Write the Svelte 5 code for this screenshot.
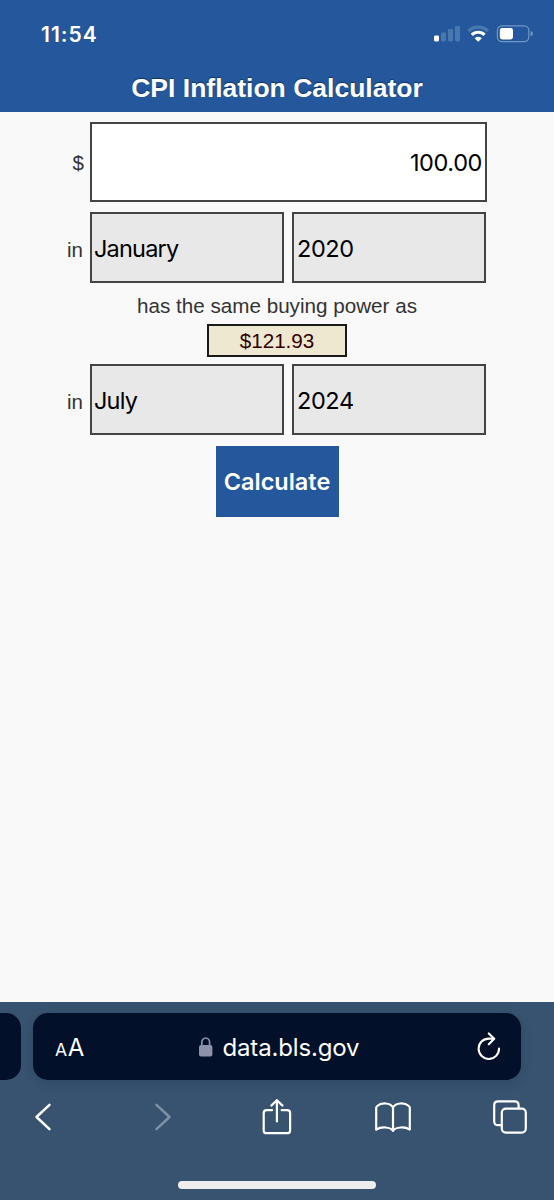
<script lang="ts">
  const months = [
    'January', 'February', 'March', 'April', 'May', 'June',
    'July', 'August', 'September', 'October', 'November', 'December',
  ];
  const years = [2020, 2021, 2022, 2023, 2024];

  let amount = $state('100.00');
  let fromMonth = $state('January');
  let fromYear = $state(2020);
  let toMonth = $state('July');
  let toYear = $state(2024);
  let result = $state('$121.93');
</script>

<div class="screen">
  <header class="header">
    <div class="status">
      <span class="status__time">11:54</span>
      <svg class="status__icons" width="100" height="18" viewBox="0 0 100 18" aria-hidden="true">
        <rect x="0" y="10.4" width="5" height="6" rx="1.3" fill="#fff" />
        <g fill="#4878ae">
          <rect x="7" y="7.4" width="5" height="9" rx="1.3" />
          <rect x="14" y="4" width="5" height="12.4" rx="1.3" />
          <rect x="21" y="1" width="5" height="15.4" rx="1.3" />
        </g>
        <g fill="none" stroke-width="3.2">
          <path d="M34.4 6.1 A14 14 0 0 1 54 6.1" stroke="#4878ae" />
          <path d="M37.8 9.9 A9 9 0 0 1 50.6 9.9" stroke="#fff" />
        </g>
        <path d="M44.2 16.8 L40.6 13.3 Q44.2 10.4 47.8 13.3 Z" fill="#fff" />
        <rect x="63.4" y="0.8" width="31.4" height="15.8" rx="4.6" fill="none" stroke="#7198c3" stroke-width="1.2" />
        <rect x="65.8" y="3" width="13.2" height="11.4" rx="2.4" fill="#fff" />
        <path d="M96.6 6 Q99 6.6 99 8.7 Q99 10.8 96.6 11.4 Z" fill="#7198c3" />
      </svg>
    </div>
    <h1>CPI Inflation Calculator</h1>
  </header>

  <main class="form">
    <div class="row">
      <label for="amount">$</label>
      <input id="amount" class="amount" type="text" bind:value={amount} />
    </div>
    <div class="row row--selects">
      <label for="from-month" class="in">in</label>
      <select id="from-month" class="month" bind:value={fromMonth}>
        {#each months as m (m)}<option value={m}>{m}</option>{/each}
      </select>
      <select aria-label="From year" bind:value={fromYear}>
        {#each years as y (y)}<option value={y}>{y}</option>{/each}
      </select>
    </div>
    <p class="caption">has the same buying power as</p>
    <output class="result">{result}</output>
    <div class="row row--selects row--to">
      <label for="to-month" class="in">in</label>
      <select id="to-month" class="month" bind:value={toMonth}>
        {#each months as m (m)}<option value={m}>{m}</option>{/each}
      </select>
      <select aria-label="To year" bind:value={toYear}>
        {#each years as y (y)}<option value={y}>{y}</option>{/each}
      </select>
    </div>
    <button type="button" class="calculate">Calculate</button>
  </main>

  <footer class="browser">
    <div class="tabs">
      <div class="tabs__prev"></div>
      <div class="address">
        <span class="address__aa"><small>A</small>A</span>
        <span class="address__site">
          <svg width="14" height="20" viewBox="0 0 14 20" aria-hidden="true">
            <rect x="0" y="8" width="13.4" height="11.4" rx="2" fill="#8c93a8" />
            <path d="M2.8 9 V5.4 a3.9 4.4 0 0 1 7.8 0 V9" fill="none" stroke="#8c93a8" stroke-width="1.7" />
          </svg>
          <span>data.bls.gov</span>
        </span>
        <svg class="address__reload" width="24" height="28" viewBox="0 0 24 28" fill="none" stroke="#fff" stroke-width="2.1" stroke-linecap="round" stroke-linejoin="round" aria-hidden="true">
          <path d="M22 16.6 A10.2 10.2 0 1 1 11.8 6.6 L17 6.8" />
          <path d="M11.8 1.4 L17.2 6.8 L11.8 12.2" />
        </svg>
      </div>
    </div>
    <nav class="toolbar">
      <svg width="36" height="28" viewBox="0 0 17 28" aria-hidden="true">
        <path d="M15 1.8 L2 14 L15 26.2" stroke-width="2.5" />
      </svg>
      <svg class="toolbar__off" width="36" height="28" viewBox="-3 0 17 28" aria-hidden="true">
        <path d="M2 1.8 L15 14 L2 26.2" stroke-width="2.5" />
      </svg>
      <svg width="36" height="36" viewBox="0 0 29 36" aria-hidden="true">
        <path d="M9.6 11.2 H4 Q1.2 11.2 1.2 14 V31.4 Q1.2 34.2 4 34.2 H24.8 Q27.6 34.2 27.6 31.4 V14 Q27.6 11.2 24.8 11.2 H19.2" />
        <path d="M14.4 22.4 V1.2 M8.8 6.6 L14.4 1.2 L20 6.6" />
      </svg>
      <svg width="36" height="31" viewBox="0 0 36 31" aria-hidden="true">
        <path d="M18 28.8 C15.4 24.8 6 24.4 1.2 27.6 V6 Q1.2 4.8 2.2 4 C6.6 0.2 15.2 0.6 18 5.4 C20.8 0.6 29.4 0.2 33.8 4 Q34.8 4.8 34.8 6 V27.6 C30 24.4 20.6 24.8 18 28.8 Z M18 5.4 V28.4" />
      </svg>
      <svg width="36" height="34" viewBox="0 0 34 34" aria-hidden="true">
        <path d="M8.8 25.2 H5 Q1.2 25.2 1.2 21.2 V5.2 Q1.2 1.4 5 1.4 H21.6 Q25.6 1.4 25.6 5.2 V8" />
        <rect x="8.8" y="8.6" width="24" height="24" rx="4" />
      </svg>
    </nav>
    <div class="home"></div>
  </footer>
</div>

<style>
  :global(body) {
    margin: 0;
  }
  .screen {
    display: flex;
    flex-direction: column;
    width: 554px;
    height: 1200px;
    overflow: hidden;
    background: #f9f9f9;
    font-family: 'Liberation Sans', Arial, sans-serif;
    color: #333;
  }
  .header {
    box-sizing: border-box;
    height: 112px;
    padding-top: 24px;
    background: #24579b;
    color: #fff;
  }
  .status {
    display: flex;
    justify-content: space-between;
    height: 20px;
    padding: 0 20px 0 41px;
  }
  .status__time {
    font: 600 21px/21px Inter, sans-serif;
    letter-spacing: 1px;
  }
  .status__icons {
    margin-top: 1px;
  }
  h1 {
    margin: 29px 0 0;
    font-size: 26.5px;
    line-height: 30px;
    text-align: center;
    text-shadow: 0 -1px 1px #143563;
  }
  .form {
    flex: 1;
    display: flex;
    flex-direction: column;
    padding-top: 10px;
  }
  .row {
    display: flex;
    align-items: center;
    height: 80px;
  }
  .row label {
    box-sizing: border-box;
    width: 90px;
    padding: 2px 6px 0 0;
    font-size: 20.5px;
    text-align: right;
  }
  .row .in {
    padding: 4px 7px 0 0;
  }
  .row--selects {
    height: 71px;
    margin-top: 10px;
  }
  .row--to {
    margin-top: 8px;
  }
  .amount,
  select {
    appearance: none;
    box-sizing: border-box;
    height: 100%;
    margin: 0;
    border: 2px solid #444;
    border-radius: 0;
    outline: none;
    font: 400 23.5px Inter, sans-serif;
    letter-spacing: -0.4px;
    color: #000;
  }
  .amount {
    width: 397px;
    padding: 0 3px;
    background: #fff;
    text-align: right;
  }
  select {
    width: 194px;
    padding: 2px 3px 0;
    background: #e8e8e8;
  }
  .month {
    padding-left: 2px;
    letter-spacing: -0.8px;
  }
  select + select {
    margin-left: 8px;
  }
  .caption {
    margin: 11px 0 0;
    font-size: 20.65px;
    line-height: 23px;
    text-align: center;
  }
  .result {
    box-sizing: border-box;
    align-self: center;
    width: 140px;
    height: 33px;
    margin-top: 7px;
    border: 2px solid #1a1a1a;
    background: #ede8cf;
    color: #300;
    font-size: 20.65px;
    line-height: 30px;
    text-align: center;
  }
  .row--selects.row--to {
    margin-top: 7px;
  }
  .calculate {
    align-self: center;
    width: 123px;
    height: 71px;
    margin-top: 11px;
    padding: 0;
    border: none;
    background: #24579b;
    color: #fff;
    font: 600 23.5px Inter, sans-serif;
  }
  .browser {
    box-sizing: border-box;
    height: 198px;
    padding-top: 11px;
    background: #37536f;
  }
  .tabs {
    display: flex;
    gap: 12px;
    height: 67px;
  }
  .tabs__prev {
    width: 21px;
    border-radius: 0 15px 15px 0;
    background: #02102a;
  }
  .address {
    display: flex;
    align-items: center;
    justify-content: space-between;
    box-sizing: border-box;
    width: 488px;
    padding: 2px 20px 0 22px;
    border-radius: 15px;
    background: #02102a;
    box-shadow: 0 3px 12px rgba(2, 16, 42, 0.15);
    color: #fff;
    font: 400 24px Inter, sans-serif;
  }
  .address__aa {
    letter-spacing: -0.4px;
  }
  .address__aa small {
    margin-right: 1px;
    font-size: 17.5px;
  }
  .address__site {
    display: flex;
    align-items: center;
    gap: 9px;
    margin-right: 2px;
    letter-spacing: -0.15px;
  }
  .address__site svg {
    margin-bottom: 2px;
  }
  .address__reload {
    margin-bottom: 4px;
  }
  .toolbar {
    display: flex;
    align-items: center;
    justify-content: space-between;
    height: 36px;
    margin-top: 19px;
    padding: 0 26px 0 25px;
  }
  .toolbar svg {
    fill: none;
    stroke: #fff;
    stroke-width: 2.2;
    stroke-linecap: round;
    stroke-linejoin: round;
  }
  .toolbar .toolbar__off {
    stroke: #8090a5;
  }
  .home {
    width: 198px;
    height: 8px;
    margin: 46px auto 0;
    border-radius: 4px;
    background: #eee;
  }
</style>
